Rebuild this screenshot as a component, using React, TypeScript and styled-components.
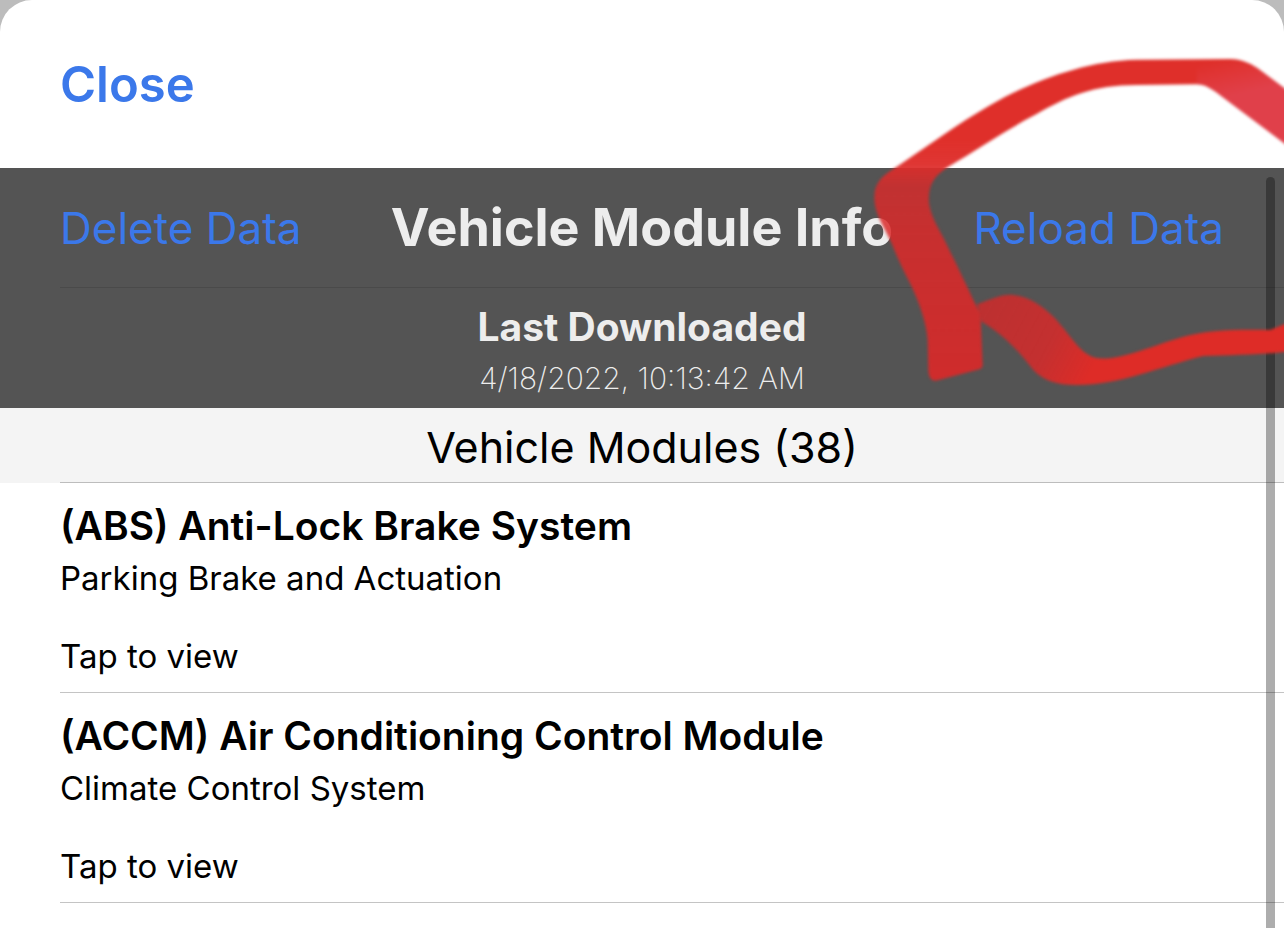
import React from "react";
import styled, { createGlobalStyle } from "styled-components";

const GlobalStyle = createGlobalStyle`
  * { box-sizing: border-box; }
  body {
    margin: 0;
    background: #bcbcbc;
    font-family: Inter, "Liberation Sans", sans-serif;
  }
  h1, h2, h3, p, ul { margin: 0; padding: 0; }
`;

const Sheet = styled.main`
  position: relative;
  min-height: 100vh;
  overflow: hidden;
  background: #ffffff;
  border-radius: 32px 32px 0 0;
`;

const NavBar = styled.header`
  display: flex;
  align-items: center;
  height: 168px;
  padding: 2px 60px 0;
`;

const TextButton = styled.button<{ $size: number; $weight: number }>`
  padding: 0;
  border: 0;
  background: none;
  color: #3b78ea;
  font-family: inherit;
  font-size: ${(p) => p.$size}px;
  font-weight: ${(p) => p.$weight};
  line-height: 60px;
  white-space: nowrap;
  cursor: pointer;
`;

const Dark = styled.section`
  background: #545454;
  color: #ededed;
`;

const TitleRow = styled.div`
  display: grid;
  grid-template-columns: 1fr auto 1fr;
  align-items: center;
  height: 120px;
  padding: 0 60px;
  & > :first-child { justify-self: start; }
  & > :last-child { justify-self: end; }
`;

const Title = styled.h1`
  font-size: 52px;
  font-weight: 700;
  line-height: 60px;
  white-space: nowrap;
`;

const Divider = styled.div<{ $color: string }>`
  height: 1px;
  margin: -1px 0 0 60px;
  background: ${(p) => p.$color};
`;

const Downloaded = styled.div`
  height: 120px;
  padding-top: 14px;
  text-align: center;
`;

const DownloadedLabel = styled.h2`
  font-size: 39px;
  font-weight: 700;
  line-height: 50px;
`;

const DownloadedTime = styled.p`
  font-size: 30px;
  font-weight: 200;
  line-height: 52px;
`;

const SectionHeader = styled.h2`
  height: 75px;
  background: #f4f4f4;
  color: #000000;
  font-size: 43px;
  font-weight: 400;
  line-height: 78px;
  text-align: center;
`;

const ModuleList = styled.ul`
  list-style: none;
`;

const ModuleButton = styled.button`
  display: flex;
  flex-direction: column;
  justify-content: flex-start;
  width: 100%;
  height: 210px;
  padding: 17px 60px 0;
  border: 0;
  background: none;
  color: #000000;
  font-family: inherit;
  text-align: left;
  cursor: pointer;
`;

const ModuleName = styled.span`
  font-size: 39px;
  font-weight: 600;
  line-height: 52px;
`;

const ModuleText = styled.span`
  font-size: 33px;
  line-height: 52px;
`;

const ModuleAction = styled(ModuleText)`
  margin-top: 26px;
`;

const ScrollThumb = styled.div`
  position: absolute;
  top: 177px;
  right: 9px;
  bottom: -10px;
  width: 9px;
  border-radius: 5px;
  background: rgba(0, 0, 0, 0.32);
`;

const Marker = styled.svg`
  position: absolute;
  top: 40px;
  right: 0;
  width: 424px;
  height: 360px;
  pointer-events: none;
`;

const modules = [
  { name: "(ABS) Anti-Lock Brake System", group: "Parking Brake and Actuation" },
  { name: "(ACCM) Air Conditioning Control Module", group: "Climate Control System" },
];

function MarkerLoop() {
  return (
    <Marker viewBox="0 0 1272 1080" aria-hidden="true">
      <defs>
        <filter id="soft" x="-5%" y="-5%" width="110%" height="110%" colorInterpolationFilters="sRGB">
          <feGaussianBlur stdDeviation="4" />
        </filter>
        <linearGradient id="fall" gradientUnits="userSpaceOnUse" x1="0" y1="300" x2="0" y2="1000">
          <stop offset="0" stopColor="#df2f2a" />
          <stop offset="0.1" stopColor="#de2d2a" stopOpacity="0.96" />
          <stop offset="0.2" stopColor="#dc2929" stopOpacity="0.8" />
          <stop offset="0.4" stopColor="#da2929" stopOpacity="0.86" />
          <stop offset="1" stopColor="#d82929" stopOpacity="0.93" />
        </linearGradient>
        <linearGradient id="edge" gradientUnits="userSpaceOnUse" x1="1080" y1="60" x2="1105" y2="170">
          <stop offset="0" stopColor="#e0404a" stopOpacity="0" />
          <stop offset="1" stopColor="#e0404a" />
        </linearGradient>
        <linearGradient id="tail" gradientUnits="userSpaceOnUse" x1="360" y1="800" x2="700" y2="980">
          <stop offset="0" stopColor="#da2626" stopOpacity="0.78" />
          <stop offset="0.6" stopColor="#d62a2a" stopOpacity="0.86" />
          <stop offset="1" stopColor="#de2c27" />
        </linearGradient>
      </defs>
      <g filter="url(#soft)">
        <path
          fill="url(#fall)"
          d="M110 380C205 318 330 222 460 158C580 102 700 62 830 59L1110 57C1150 57 1180 75 1200 90L1300 165V330L1080 165C1050 143 1035 134 1010 133L830 135C700 135 620 170 530 222C440 268 350 330 265 380C222 408 203 435 207 490C214 535 238 568 256 605C290 675 315 725 340 780C350 800 361 815 362 835L368 975C368 985 360 988 350 990L228 1022C212 1023 206 1010 205 990L203 900C200 850 175 780 150 730C130 690 110 650 95 610C65 545 35 510 45 450C54 415 80 400 110 380Z"
        />
        <path
          fill="url(#edge)"
          d="M1010 57H1110C1150 57 1180 75 1200 90L1300 165V330L1080 165C1050 143 1035 134 1010 133Z"
        />
        <path
          fill="url(#tail)"
          d="M352 792C395 778 430 760 460 765C510 770 550 800 585 835C635 890 665 950 715 955C790 960 880 915 960 893C1040 870 1130 868 1230 870L1300 842V932C1220 945 1120 945 1030 948C900 980 780 1035 650 1035C590 1035 550 1022 520 990C480 940 440 890 365 845Z"
        />
      </g>
    </Marker>
  );
}

export default function App() {
  return (
    <>
      <GlobalStyle />
      <Sheet>
        <NavBar>
          <TextButton type="button" $size={49} $weight={600}>Close</TextButton>
        </NavBar>
        <Dark>
          <TitleRow>
            <TextButton type="button" $size={44} $weight={400}>Delete Data</TextButton>
            <Title>Vehicle Module Info</Title>
            <TextButton type="button" $size={44} $weight={400}>Reload Data</TextButton>
          </TitleRow>
          <Divider $color="#4a4a4a" />
          <Downloaded>
            <DownloadedLabel>Last Downloaded</DownloadedLabel>
            <DownloadedTime>4/18/2022, 10:13:42 AM</DownloadedTime>
          </Downloaded>
        </Dark>
        <SectionHeader>Vehicle Modules (38)</SectionHeader>
        <Divider $color="#bdbdbd" />
        <ModuleList>
          {modules.map((m) => (
            <li key={m.name}>
              <ModuleButton type="button">
                <ModuleName>{m.name}</ModuleName>
                <ModuleText>{m.group}</ModuleText>
                <ModuleAction>Tap to view</ModuleAction>
              </ModuleButton>
              <Divider $color="#c4c4c4" />
            </li>
          ))}
        </ModuleList>
        <ScrollThumb />
        <MarkerLoop />
      </Sheet>
    </>
  );
}
